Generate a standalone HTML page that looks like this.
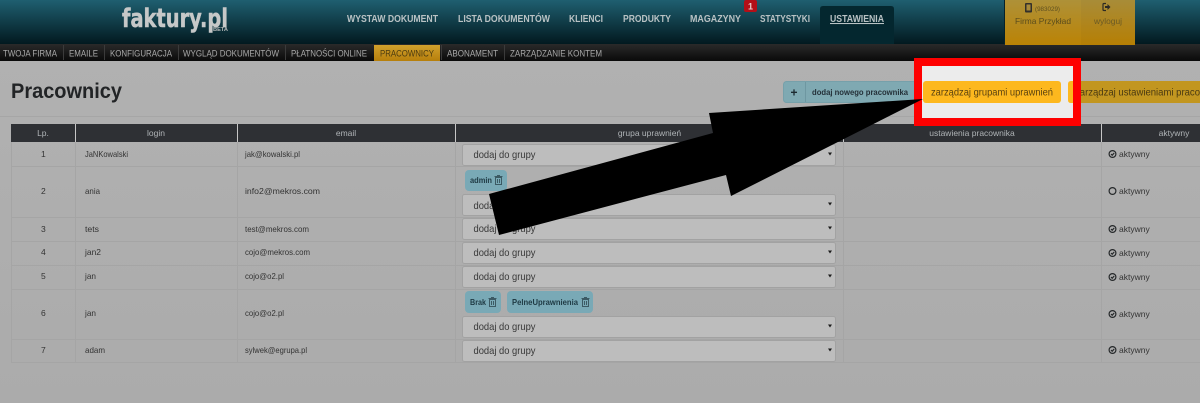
<!DOCTYPE html>
<html lang="pl"><head><meta charset="utf-8"><title>Pracownicy</title>
<style>
html,body{margin:0;padding:0;width:1200px;height:403px;overflow:hidden;background:#b0b0b0}
svg{display:block}
text{font-family:"Liberation Sans",sans-serif}
.nav{font-size:10.5px;font-weight:bold;fill:#b9c2c4}
.sub{font-size:9px;fill:#a8a8a8}
.th{font-size:8.5px;fill:#b0b4b7;text-anchor:middle}
.td{font-size:8.5px;fill:#333}
.sel{font-size:10.5px;fill:#383838}
.tag{font-size:8.5px;font-weight:bold;fill:#1f3a44}
</style></head><body>
<svg width="1200" height="403" viewBox="0 0 1200 403" xmlns="http://www.w3.org/2000/svg">
<defs>
<linearGradient id="h" x1="0" y1="0" x2="0" y2="1"><stop offset="0" stop-color="#1f5f70"/><stop offset="1" stop-color="#02191f"/></linearGradient>
<linearGradient id="s" x1="0" y1="0" x2="0" y2="1"><stop offset="0" stop-color="#2a2a2a"/><stop offset="1" stop-color="#0a0a0a"/></linearGradient>
<linearGradient id="g" x1="0" y1="0" x2="0" y2="1"><stop offset="0" stop-color="#ae9138"/><stop offset="1" stop-color="#bb8305"/></linearGradient>
<linearGradient id="g2" x1="0" y1="0" x2="0" y2="1"><stop offset="0" stop-color="#a88c38"/><stop offset="1" stop-color="#b67f04"/></linearGradient>
<linearGradient id="a" x1="0" y1="0" x2="0" y2="1"><stop offset="0" stop-color="#d1a02c"/><stop offset="1" stop-color="#b67f0c"/></linearGradient>
<linearGradient id="bg" x1="0" y1="0" x2="0" y2="1"><stop offset="0" stop-color="#b2b2b2"/><stop offset="1" stop-color="#ababab"/></linearGradient>
</defs>
<rect width="1200" height="403" fill="url(#bg)"/>
<!-- header -->
<rect width="1200" height="44" fill="url(#h)"/>
<rect y="44" width="1200" height="17" fill="url(#s)"/>
<text x="122" y="27" font-size="26" font-weight="bold" style="font-family:'DejaVu Sans',sans-serif" fill="#c6c8c8" stroke="#c6c8c8" stroke-width=".5" stroke-linejoin="round" textLength="106" lengthAdjust="spacingAndGlyphs">faktury.pl</text>
<text x="213" y="31" font-size="5" font-weight="bold" fill="#b5b8b8" textLength="15" lengthAdjust="spacingAndGlyphs">BETA</text>
<text class="nav" x="347" y="22" textLength="91" lengthAdjust="spacingAndGlyphs">WYSTAW DOKUMENT</text>
<text class="nav" x="458" y="22" textLength="92" lengthAdjust="spacingAndGlyphs">LISTA DOKUMENTÓW</text>
<text class="nav" x="569" y="22" textLength="34" lengthAdjust="spacingAndGlyphs">KLIENCI</text>
<text class="nav" x="623" y="22" textLength="48" lengthAdjust="spacingAndGlyphs">PRODUKTY</text>
<text class="nav" x="690" y="22" textLength="51" lengthAdjust="spacingAndGlyphs">MAGAZYNY</text>
<text class="nav" x="760" y="22" textLength="50" lengthAdjust="spacingAndGlyphs">STATYSTYKI</text>
<rect x="744" y="0" width="13" height="12" rx="2" fill="#b30f18"/>
<text x="750.500" y="9.500" font-size="9" font-weight="bold" fill="#e8c8c8" text-anchor="middle">1</text>
<path d="M820 44V9q0-3 3-3h68q3 0 3 3v35z" fill="#04272f"/>
<text class="nav" x="830" y="22" textLength="54" lengthAdjust="spacingAndGlyphs" text-decoration="underline" fill="#c4cbcc">USTAWIENIA</text>
<!-- gold -->
<rect x="1004" y="0" width="1" height="44" fill="#06222a"/>
<rect x="1005" width="76" height="45" fill="url(#g)"/>
<rect x="1081" width="54" height="45" fill="url(#g2)"/>
<rect x="1025" y="3" width="7" height="9.500" rx="1" fill="#33302a"/>
<rect x="1026.500" y="4.500" width="4" height="6" fill="#a88a3a"/>
<text x="1035" y="11" font-size="6.500" fill="#5f5020" textLength="25" lengthAdjust="spacingAndGlyphs">(983029)</text>
<text x="1015" y="24" font-size="8.500" fill="#5a4c1c" textLength="56" lengthAdjust="spacingAndGlyphs">Firma Przykład</text>
<path d="M1106 3.500h-2q-1 0-1 1v5q0 1 1 1h2" fill="none" stroke="#2c2a24" stroke-width="1.200"/>
<path d="M1105 6h2.500V4l3 3-3 3V8H1105z" fill="#2c2a24"/>
<text x="1094" y="24" font-size="8.500" fill="#6b5a24" textLength="28" lengthAdjust="spacingAndGlyphs">wyloguj</text>
<!-- subnav -->
<g stroke="#3b3b3b">
<path d="M63.500 45V60M104.500 45V60M178.500 45V60M285.500 45V60M441.500 45V60M504.500 45V60"/>
</g>
<rect x="374" y="45" width="66" height="16" fill="url(#a)"/>
<text class="sub" x="3" y="56.500" textLength="54" lengthAdjust="spacingAndGlyphs">TWOJA FIRMA</text>
<text class="sub" x="69" y="56.500" textLength="29" lengthAdjust="spacingAndGlyphs">EMAILE</text>
<text class="sub" x="110" y="56.500" textLength="62" lengthAdjust="spacingAndGlyphs">KONFIGURACJA</text>
<text class="sub" x="183" y="56.500" textLength="96" lengthAdjust="spacingAndGlyphs">WYGLĄD DOKUMENTÓW</text>
<text class="sub" x="291" y="56.500" textLength="76" lengthAdjust="spacingAndGlyphs">PŁATNOŚCI ONLINE</text>
<text class="sub" x="380" y="56.500" textLength="54" lengthAdjust="spacingAndGlyphs" style="fill:#4a3a10">PRACOWNICY</text>
<text class="sub" x="447" y="56.500" textLength="51" lengthAdjust="spacingAndGlyphs">ABONAMENT</text>
<text class="sub" x="510" y="56.500" textLength="92" lengthAdjust="spacingAndGlyphs">ZARZĄDZANIE KONTEM</text>
<!-- title -->
<text x="11" y="98" font-size="21" font-weight="bold" fill="#222426" textLength="111" lengthAdjust="spacingAndGlyphs">Pracownicy</text>
<rect y="116" width="1200" height="1" fill="#a6a6a6"/>
<!-- buttons -->
<rect x="783.500" y="81.500" width="135" height="21" rx="3" fill="#7fa9b2" stroke="#76a0aa"/>
<rect x="805" y="82" width="1" height="20" fill="#6e97a1"/>
<text x="794" y="96.500" font-size="12" font-weight="bold" fill="#1c2a30" text-anchor="middle">+</text>
<text x="812" y="95" font-size="8.500" font-weight="bold" fill="#243038" textLength="96" lengthAdjust="spacingAndGlyphs">dodaj nowego pracownika</text>
<rect x="1068" y="81" width="140" height="22" rx="3" fill="#c29620"/>
<text x="1075" y="95.500" font-size="10" fill="#4a3a12" textLength="125" lengthAdjust="spacingAndGlyphs">zarządzaj ustawieniami praco</text>
<!-- table header -->
<rect x="11" y="124" width="1189" height="18" fill="#2e3034"/>
<g fill="#c6c6c6"><rect x="75" y="124" width="1" height="18"/><rect x="237" y="124" width="1" height="18"/><rect x="455" y="124" width="1" height="18"/><rect x="843" y="124" width="1" height="18"/><rect x="1101" y="124" width="1" height="18"/></g>
<text class="th" x="43" y="136">Lp.</text>
<text class="th" x="156" y="136">login</text>
<text class="th" x="346" y="136">email</text>
<text class="th" x="649.500" y="136">grupa uprawnień</text>
<text class="th" x="972" y="136">ustawienia pracownika</text>
<text class="th" x="1174" y="136">aktywny</text>
<!-- table grid -->
<g fill="#a5a5a5">
<rect x="11" y="166" width="1189" height="1"/><rect x="11" y="217" width="1189" height="1"/><rect x="11" y="241" width="1189" height="1"/><rect x="11" y="265" width="1189" height="1"/><rect x="11" y="289" width="1189" height="1"/><rect x="11" y="339" width="1189" height="1"/><rect x="11" y="362" width="1189" height="1"/>
<rect x="75" y="142" width="1" height="220"/><rect x="237" y="142" width="1" height="220"/><rect x="455" y="142" width="1" height="220"/><rect x="843" y="142" width="1" height="220"/><rect x="1101" y="142" width="1" height="220"/><rect x="11" y="142" width="1" height="220"/>
</g>
<!-- rows -->
<g>
<text class="td" x="41" y="157">1</text><text class="td" x="85" y="157" textLength="43" lengthAdjust="spacingAndGlyphs">JaNKowalski</text><text class="td" x="245" y="157" textLength="55" lengthAdjust="spacingAndGlyphs">jak@kowalski.pl</text>
<text class="td" x="41" y="194">2</text><text class="td" x="85" y="194" textLength="15" lengthAdjust="spacingAndGlyphs">ania</text><text class="td" x="245" y="194" textLength="75" lengthAdjust="spacingAndGlyphs">info2@mekros.com</text>
<text class="td" x="41" y="232">3</text><text class="td" x="85" y="232" textLength="14" lengthAdjust="spacingAndGlyphs">tets</text><text class="td" x="245" y="232" textLength="64" lengthAdjust="spacingAndGlyphs">test@mekros.com</text>
<text class="td" x="41" y="255">4</text><text class="td" x="85" y="255" textLength="16" lengthAdjust="spacingAndGlyphs">jan2</text><text class="td" x="245" y="255" textLength="65" lengthAdjust="spacingAndGlyphs">cojo@mekros.com</text>
<text class="td" x="41" y="279">5</text><text class="td" x="85" y="279" textLength="11" lengthAdjust="spacingAndGlyphs">jan</text><text class="td" x="245" y="279" textLength="39" lengthAdjust="spacingAndGlyphs">cojo@o2.pl</text>
<text class="td" x="41" y="316">6</text><text class="td" x="85" y="316" textLength="11" lengthAdjust="spacingAndGlyphs">jan</text><text class="td" x="245" y="316" textLength="39" lengthAdjust="spacingAndGlyphs">cojo@o2.pl</text>
<text class="td" x="41" y="353">7</text><text class="td" x="85" y="353" textLength="20" lengthAdjust="spacingAndGlyphs">adam</text><text class="td" x="245" y="353" textLength="62" lengthAdjust="spacingAndGlyphs">sylwek@egrupa.pl</text>
</g>
<!-- selects -->
<g fill="#bdbdbd" stroke="#a2a2a2">
<rect x="462.500" y="144.500" width="373" height="21" rx="2"/>
<rect x="462.500" y="194.500" width="373" height="21" rx="2"/>
<rect x="462.500" y="218.500" width="373" height="21" rx="2"/>
<rect x="462.500" y="242.500" width="373" height="21" rx="2"/>
<rect x="462.500" y="266.500" width="373" height="21" rx="2"/>
<rect x="462.500" y="316.500" width="373" height="21" rx="2"/>
<rect x="462.500" y="340.500" width="373" height="21" rx="2"/>
</g>
<g>
<text class="sel" x="473.500" y="158" textLength="62" lengthAdjust="spacingAndGlyphs">dodaj do grupy</text>
<text class="sel" x="473.500" y="209" textLength="62" lengthAdjust="spacingAndGlyphs">dodaj do grupy</text>
<text class="sel" x="473.500" y="232" textLength="62" lengthAdjust="spacingAndGlyphs">dodaj do grupy</text>
<text class="sel" x="473.500" y="256" textLength="62" lengthAdjust="spacingAndGlyphs">dodaj do grupy</text>
<text class="sel" x="473.500" y="280" textLength="62" lengthAdjust="spacingAndGlyphs">dodaj do grupy</text>
<text class="sel" x="473.500" y="330" textLength="62" lengthAdjust="spacingAndGlyphs">dodaj do grupy</text>
<text class="sel" x="473.500" y="354" textLength="62" lengthAdjust="spacingAndGlyphs">dodaj do grupy</text>
</g>
<g fill="#1a1a1a">
<path d="M828 152.500h4l-2 3zM828 202.500h4l-2 3zM828 226.500h4l-2 3zM828 250.500h4l-2 3zM828 274.500h4l-2 3zM828 324.500h4l-2 3zM828 348.500h4l-2 3z"/>
</g>
<!-- tags -->
<rect x="465" y="170" width="42" height="21" rx="4" fill="#79a9b6"/>
<text class="tag" x="470" y="183" textLength="22" lengthAdjust="spacingAndGlyphs">admin</text>
<rect x="465" y="291" width="36" height="22" rx="4" fill="#79a9b6"/>
<text class="tag" x="470" y="305" textLength="16" lengthAdjust="spacingAndGlyphs">Brak</text>
<rect x="507" y="291" width="86" height="22" rx="4" fill="#79a9b6"/>
<text class="tag" x="512" y="305" textLength="66" lengthAdjust="spacingAndGlyphs">PelneUprawnienia</text>
<g fill="none" stroke="#3c5a64" stroke-width="1">
<path d="M495.500 177.500h6v7h-6zM494.500 176.500h8M497 175.500h3M497.500 179v4M499.500 179v4"/>
<path d="M489.500 299.500h6v7h-6zM488.500 298.500h8M491 297.500h3M491.500 301v4M493.500 301v4"/>
<path d="M582.500 299.500h6v7h-6zM581.500 298.500h8M584 297.500h3M584.500 301v4M586.500 301v4"/>
</g>
<!-- aktywny -->
<g fill="none" stroke="#25282a" stroke-width="1.200">
<circle cx="1112.500" cy="154" r="3.400"/><path d="M1111 154l1.200 1.200 2-2.200"/>
<circle cx="1112.500" cy="191" r="3.400"/>
<circle cx="1112.500" cy="229" r="3.400"/><path d="M1111 229l1.200 1.200 2-2.200"/>
<circle cx="1112.500" cy="253" r="3.400"/><path d="M1111 253l1.200 1.200 2-2.200"/>
<circle cx="1112.500" cy="277" r="3.400"/><path d="M1111 277l1.200 1.200 2-2.200"/>
<circle cx="1112.500" cy="314" r="3.400"/><path d="M1111 314l1.200 1.200 2-2.200"/>
<circle cx="1112.500" cy="350" r="3.400"/><path d="M1111 350l1.200 1.200 2-2.200"/>
</g>
<g>
<text class="td" x="1119" y="157">aktywny</text><text class="td" x="1119" y="194">aktywny</text><text class="td" x="1119" y="232">aktywny</text><text class="td" x="1119" y="256">aktywny</text><text class="td" x="1119" y="280">aktywny</text><text class="td" x="1119" y="317">aktywny</text><text class="td" x="1119" y="353">aktywny</text>
</g>
<!-- highlight -->
<rect x="922" y="66" width="151" height="52" fill="#ececec"/>
<rect x="923" y="81" width="138" height="22" rx="3" fill="#fdb81e"/>
<text x="931" y="95.500" font-size="10" fill="#5a4210" textLength="122" lengthAdjust="spacingAndGlyphs">zarządzaj grupami uprawnień</text>
<path d="M1073 81h-2q-3 0-3 3v16q0 3 3 3h2z" fill="#fdb81e"/>
<rect x="918" y="62" width="159" height="60" fill="none" stroke="#fe0000" stroke-width="8"/>
<polygon points="489,194 713,133 709,113 923,99 731,196 726,175 499,235" fill="#000"/>
</svg>
</body></html>
